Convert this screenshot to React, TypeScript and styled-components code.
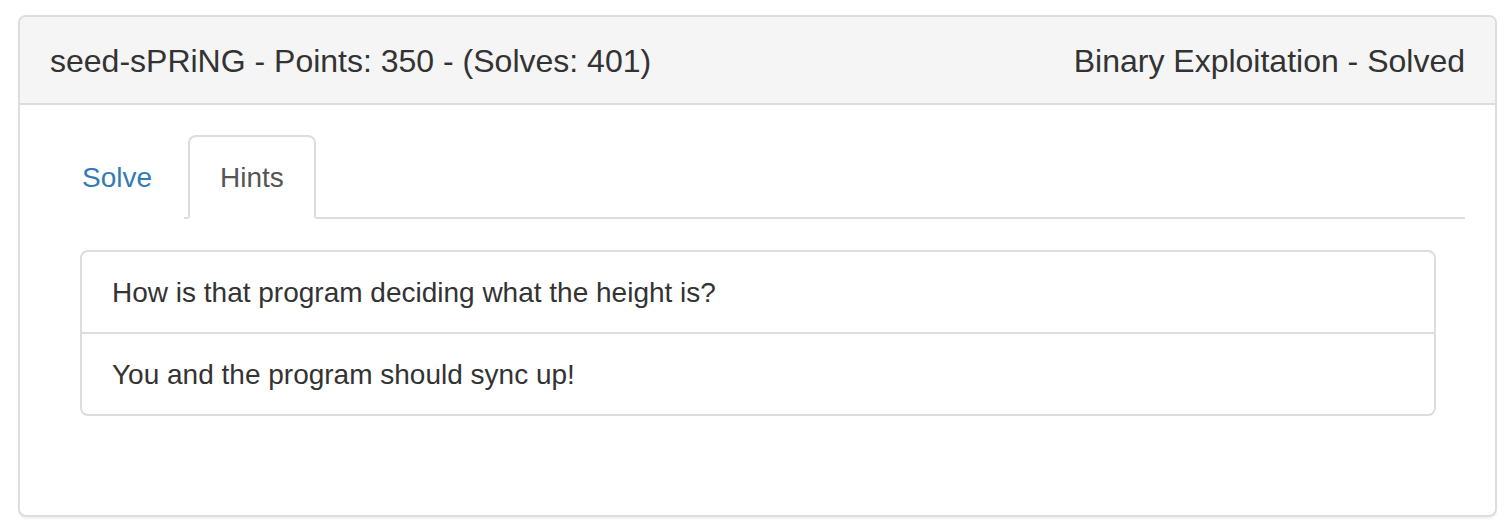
import React, { useState } from "react";
import styled, { createGlobalStyle } from "styled-components";

const GlobalStyle = createGlobalStyle`
  html, body { margin: 0; padding: 0; background: #fff; }
  body {
    font-family: "Liberation Sans", Arial, Helvetica, sans-serif;
    color: #333;
  }
  * { box-sizing: border-box; }
`;

const Page = styled.div`
  padding: 15px 7px 15px 18px;
`;

const Panel = styled.section`
  border: 2px solid #ddd;
  border-radius: 8px;
  background: #fff;
  box-shadow: 0 2px 2px rgba(0, 0, 0, 0.05);
  overflow: hidden;
`;

const Heading = styled.header`
  display: flex;
  align-items: center;
  justify-content: space-between;
  height: 88px;
  padding: 2px 30px 0;
  background: #f5f5f5;
  border-bottom: 2px solid #ddd;
`;

const Title = styled.h3`
  margin: 0;
  font-size: 32px;
  font-weight: 400;
  line-height: 36px;
  color: #333;
`;

const Body = styled.div`
  padding: 30px 30px 30px;
`;

const Tabs = styled.ul`
  display: flex;
  margin: 0;
  padding: 0;
  list-style: none;
  border-bottom: 2px solid #ddd;
`;

const TabItem = styled.li`
  margin: 0 4px -2px 0;
`;

const TabLink = styled.button<{ $active: boolean }>`
  display: block;
  padding: 21px 30px 19px;
  font-family: inherit;
  font-size: 28px;
  line-height: 40px;
  background: #fff;
  cursor: pointer;
  border: 2px solid ${(p) => (p.$active ? "#ddd" : "transparent")};
  border-bottom-color: transparent;
  border-radius: 8px 8px 0 0;
  color: ${(p) => (p.$active ? "#555" : "#337ab7")};
`;

const TabPane = styled.div`
  padding: 31px 29px 69px 30px;
`;

const HintList = styled.ul`
  margin: 0;
  padding: 0;
  list-style: none;
`;

const HintItem = styled.li`
  padding: 21px 30px 19px;
  font-size: 28px;
  line-height: 40px;
  color: #333;
  border: 2px solid #ddd;
  margin-bottom: -2px;
  &:first-child {
    border-top-left-radius: 8px;
    border-top-right-radius: 8px;
  }
  &:last-child {
    margin-bottom: 0;
    border-bottom-left-radius: 8px;
    border-bottom-right-radius: 8px;
  }
`;

const hints = [
  "How is that program deciding what the height is?",
  "You and the program should sync up!",
];

export default function App() {
  const [tab, setTab] = useState<"solve" | "hints">("hints");
  return (
    <Page>
      <GlobalStyle />
      <Panel>
        <Heading>
          <Title>seed-sPRiNG - Points: 350 - (Solves: 401)</Title>
          <Title>Binary Exploitation - Solved</Title>
        </Heading>
        <Body>
          <Tabs>
            <TabItem>
              <TabLink $active={tab === "solve"} onClick={() => setTab("solve")}>
                Solve
              </TabLink>
            </TabItem>
            <TabItem>
              <TabLink $active={tab === "hints"} onClick={() => setTab("hints")}>
                Hints
              </TabLink>
            </TabItem>
          </Tabs>
          <TabPane>
            <HintList>
              {hints.map((h) => (
                <HintItem key={h}>{h}</HintItem>
              ))}
            </HintList>
          </TabPane>
        </Body>
      </Panel>
    </Page>
  );
}
